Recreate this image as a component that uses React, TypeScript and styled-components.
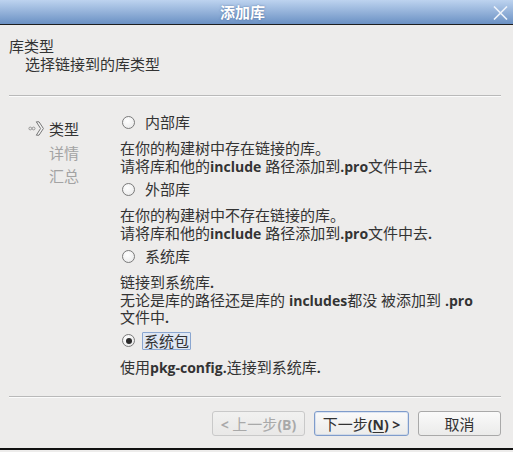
import React, { useState } from 'react';
import styled, { createGlobalStyle } from 'styled-components';

const GlobalStyle = createGlobalStyle`
  html, body {
    margin: 0;
    padding: 0;
    background: #edeceb;
  }
  body {
    font-family: "Open Sans", "Noto Sans CJK SC", sans-serif;
    font-size: 15px;
    color: #333;
  }
`;

const Window = styled.div`
  width: 513px;
  height: 452px;
  display: flex;
  flex-direction: column;
  background: #edeceb;
  box-sizing: border-box;
  overflow: hidden;
`;

const TitleBar = styled.div`
  height: 24px;
  flex: none;
  position: relative;
  display: flex;
  align-items: center;
  justify-content: center;
  padding-right: 28px;
  background: linear-gradient(#bdd3ef, #6b91c4);
  border-bottom: 1px solid #1e1e1e;
`;

const Title = styled.div`
  color: #fff;
  font-weight: bold;
  font-size: 15px;
  line-height: 24px;
  text-shadow: 0 0 2px rgba(40, 70, 120, 0.6);
`;

const CloseButton = styled.button`
  position: absolute;
  right: 4px;
  top: 5px;
  width: 17px;
  height: 16px;
  padding: 0;
  border: none;
  background: none;
  display: flex;
  align-items: center;
  justify-content: center;
`;

const Body = styled.div`
  flex: 1;
  display: flex;
  flex-direction: column;
  padding: 12px 12px 0 9px;
  min-height: 0;
`;

const Header = styled.div`
  line-height: 18px;
`;

const PageTitle = styled.div``;

const PageSubtitle = styled.div`
  padding-left: 16px;
`;

const Rule = styled.div<{ $gap: number }>`
  height: 1px;
  background: #b9b9b9;
  border-bottom: 1px solid #fbfbfb;
  margin-top: ${p => p.$gap}px;
  flex: none;
`;

const Main = styled.div`
  flex: 1;
  display: flex;
  min-height: 0;
`;

const SideNav = styled.div`
  width: 111px;
  flex: none;
  padding-top: 20px;
  padding-left: 19px;
  box-sizing: border-box;
`;

const NavItem = styled.div<{ $active?: boolean }>`
  display: flex;
  align-items: center;
  height: 23.5px;
  color: ${p => (p.$active ? '#333' : '#a3a3a3')};
`;

const NavMark = styled.span`
  width: 21px;
  flex: none;
  display: flex;
  align-items: center;
`;

const Content = styled.div`
  flex: 1;
  padding-top: 13px;
`;

const Option = styled.div`
  margin-bottom: 2px;
`;

const RadioRow = styled.label`
  display: flex;
  align-items: center;
  height: 24px;
  padding-left: 2px;
  cursor: pointer;
`;

const RadioCircle = styled.span<{ $checked: boolean }>`
  width: 13px;
  height: 13px;
  box-sizing: border-box;
  border-radius: 50%;
  border: 1px solid #7a7a7a;
  background: radial-gradient(circle at 40% 35%, #ffffff, #e6e6e6);
  display: flex;
  align-items: center;
  justify-content: center;
  margin-right: 8px;
  flex: none;

  &::after {
    content: '';
    width: 6px;
    height: 6px;
    border-radius: 50%;
    background: #2b2b2b;
    display: ${p => (p.$checked ? 'block' : 'none')};
  }
`;

const RadioLabel = styled.span<{ $focused: boolean }>`
  line-height: 16px;
  padding: 0 1px;
  margin-left: ${p => (p.$focused ? '-1px' : '0')};
  border: 1px solid ${p => (p.$focused ? '#8aa6d0' : 'transparent')};
  background: ${p => (p.$focused ? '#dfe7f3' : 'transparent')};
  border-radius: 1px;
`;

const Description = styled.div`
  line-height: 17.5px;
  margin-top: 6px;
`;

const DescLine = styled.div`
  white-space: nowrap;
`;

const Latin = styled.b`
  font-family: "Open Sans", sans-serif;
  font-weight: 700;
  font-size: 14px;
`;

const ButtonRow = styled.div`
  height: 50px;
  flex: none;
  display: flex;
  justify-content: flex-end;
  align-items: flex-start;
  gap: 9px;
  padding-top: 13px;
  box-sizing: border-box;
`;

const Button = styled.button<{ $width: number; $focused?: boolean }>`
  width: ${p => p.$width}px;
  height: 25px;
  padding: 0;
  border-radius: 3px;
  border: 1px solid ${p => (p.$focused ? '#7f9ccb' : '#a9a9a9')};
  background: linear-gradient(#fafafa, #ebebea);
  box-shadow: ${p => (p.$focused ? 'inset 0 0 0 1px rgba(160,185,225,0.35)' : 'none')};
  font-family: "Open Sans", "Noto Sans CJK SC", sans-serif;
  font-size: 15px;
  color: #333;
  cursor: pointer;

  &:disabled {
    color: #a9a9a9;
    border-color: #c9c9c9;
    background: linear-gradient(#f1f1f0, #e9e8e7);
    cursor: default;
  }
`;

const Mnemonic = styled.u`
  text-underline-offset: 2px;
`;

const FrameBottom = styled.div`
  height: 2px;
  background: #111;
  flex: none;
  margin-bottom: 2px;
`;

const options = [
  {
    id: 'internal',
    label: '内部库',
    lines: [
      <>在你的构建树中存在链接的库。</>,
      <>请将库和他的<Latin>include</Latin> 路径添加到<Latin>.pro</Latin>文件中去<Latin>.</Latin></>,
    ],
  },
  {
    id: 'external',
    label: '外部库',
    lines: [
      <>在你的构建树中不存在链接的库。</>,
      <>请将库和他的<Latin>include</Latin> 路径添加到<Latin>.pro</Latin>文件中去<Latin>.</Latin></>,
    ],
  },
  {
    id: 'system',
    label: '系统库',
    lines: [
      <>链接到系统库<Latin>.</Latin></>,
      <>无论是库的路径还是库的 <Latin>includes</Latin>都没 被添加到 <Latin>.pro</Latin></>,
      <>文件中<Latin>.</Latin></>,
    ],
  },
  {
    id: 'package',
    label: '系统包',
    lines: [<>使用<Latin>pkg-config</Latin><Latin>.</Latin>连接到系统库<Latin>.</Latin></>],
  },
];

const NavArrow = () => (
  <svg width="16" height="15" viewBox="0 0 16 15">
    <circle cx="2.3" cy="7.5" r="1.4" fill="none" stroke="#8d8d8d" strokeWidth="0.9" />
    <circle cx="5.6" cy="7.5" r="1.4" fill="none" stroke="#8d8d8d" strokeWidth="0.9" />
    <path
      d="M8.3 0.8 L11 0.8 L15.4 7.5 L11 14.2 L8.3 14.2 L12.6 7.5 Z"
      fill="#f4f4f4"
      stroke="#767676"
      strokeWidth="1"
      strokeLinejoin="round"
    />
  </svg>
);

const App: React.FC = () => {
  const [selected, setSelected] = useState('package');

  return (
    <>
      <GlobalStyle />
      <Window>
        <TitleBar>
          <Title>添加库</Title>
          <CloseButton aria-label="Close">
            <svg width="15" height="14" viewBox="0 0 15 14">
              <path d="M1 0.5 L14 13.5 M14 0.5 L1 13.5" stroke="#eef3fa" strokeWidth="1.6" />
            </svg>
          </CloseButton>
        </TitleBar>
        <Body>
          <Header>
            <PageTitle>库类型</PageTitle>
            <PageSubtitle>选择链接到的库类型</PageSubtitle>
          </Header>
          <Rule $gap={22} />
          <Main>
            <SideNav>
              <NavItem $active>
                <NavMark>
                  <NavArrow />
                </NavMark>
                类型
              </NavItem>
              <NavItem>
                <NavMark />
                详情
              </NavItem>
              <NavItem>
                <NavMark />
                汇总
              </NavItem>
            </SideNav>
            <Content>
              {options.map(opt => (
                <Option key={opt.id}>
                  <RadioRow onClick={() => setSelected(opt.id)}>
                    <RadioCircle $checked={selected === opt.id} />
                    <RadioLabel $focused={selected === opt.id}>{opt.label}</RadioLabel>
                  </RadioRow>
                  <Description>
                    {opt.lines.map((line, i) => (
                      <DescLine key={i}>{line}</DescLine>
                    ))}
                  </Description>
                </Option>
              ))}
            </Content>
          </Main>
          <Rule $gap={0} />
          <ButtonRow>
            <Button $width={93} disabled>
              <Latin>&lt; </Latin>上一步<Latin>(B)</Latin>
            </Button>
            <Button $width={95} $focused>
              下一步<Latin>(<Mnemonic>N</Mnemonic>) &gt;</Latin>
            </Button>
            <Button $width={83}>取消</Button>
          </ButtonRow>
        </Body>
        <FrameBottom />
      </Window>
    </>
  );
};

export default App;
